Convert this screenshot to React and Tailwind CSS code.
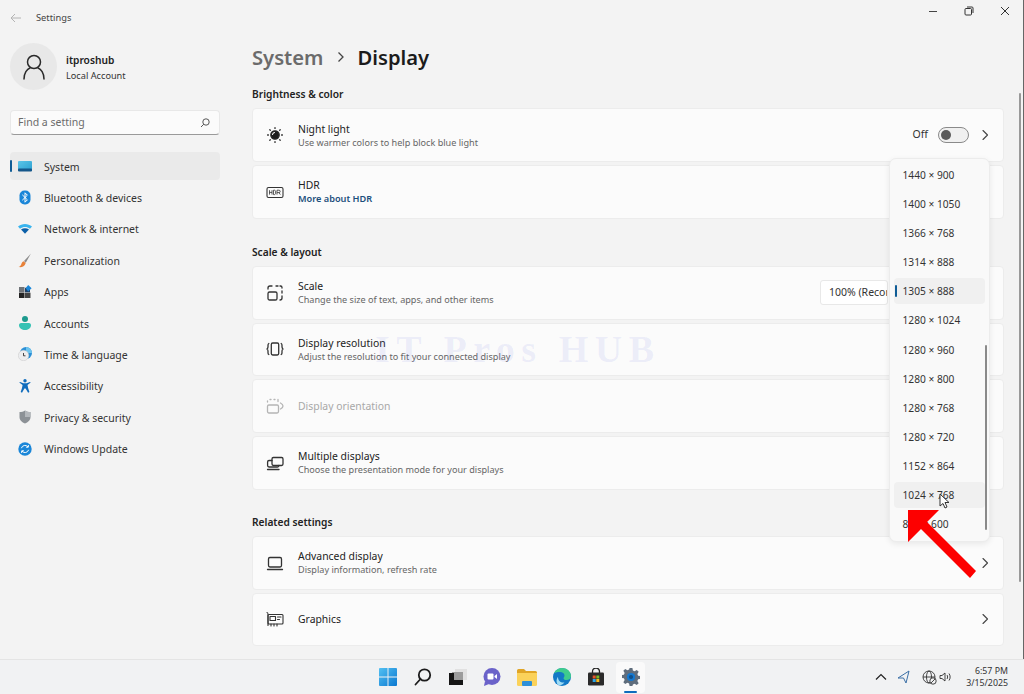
import React from "react";

const S = ({ children, w = 20, h = 20, vb = "0 0 20 20", sw = 1.3, c = "#333" }) => (
  <svg width={w} height={h} viewBox={vb} fill="none" stroke={c} strokeWidth={sw} strokeLinecap="round" strokeLinejoin="round">{children}</svg>
);

const Chevron = () => (
  <S w={10} h={12} vb="0 0 10 12" sw={1.1} c="#444"><path d="M3 1.500 7.500 6 3 10.500" /></S>
);

const NightIcon = () => (
  <S sw={1.3} c="#2b2b2b">
    <circle cx="10" cy="10" r="4.200" fill="#1e1e1e" />
    <path d="M7.500 9.500a2.600 2.600 0 0 1 2-2" stroke="#fff" strokeWidth="1.100" />
    <path d="M10 2.600v.8M10 16.600v.8M2.600 10h.8M16.600 10h.8M4.800 4.800l.5.500M14.700 14.700l.5.500M4.800 15.200l.5-.5M14.700 5.300l.5-.5" />
  </S>
);
const HdrIcon = () => (
  <svg width="20" height="20" viewBox="0 0 20 20" fill="none" stroke="#333" strokeWidth="1.100">
    <rect x="2" y="5.500" width="16" height="10" rx="1.500" />
    <path d="M4.500 8.200v4.400M7 8.200v4.400M4.500 10.400H7M8.500 8.200v4.400h1.100a1.600 1.600 0 0 0 1-1V9.200a1.600 1.600 0 0 0-1-1zM12 12.600V8.200h2a1.100 1.100 0 0 1 0 2.400h-2M14 10.600l1.300 2" strokeWidth=".8" />
  </svg>
);
const ScaleIcon = () => (
  <S c="#333">
    <rect x="3" y="9" width="9" height="8" rx="1.600" />
    <path d="M3 6V5a2 2 0 0 1 2-2h2M11 3h2M15 3h.5A1.500 1.500 0 0 1 17 4.500V5M17 8v2M17 13v2a2 2 0 0 1-2 2" />
  </S>
);
const ResIcon = () => (
  <S c="#333">
    <rect x="6.300" y="4" width="7.400" height="12" rx="1.400" />
    <path d="M3.800 4.500C2.800 5 3 6 3 7s.4 2-1 3c1.400 1 1 2 1 3s-.2 2 .8 2.500M16.200 4.500c1 .5.8 1.500.8 2.500s-.4 2 1 3c-1.400 1-1 2-1 3s.2 2-.8 2.500" />
  </S>
);
const OrientIcon = () => (
  <S c="#b5b5b5">
    <rect x="2.500" y="9" width="11" height="8" rx="1.400" />
    <path d="M2.500 6V5M5 3.500h1M9 3.500h1M13 3.500v2M15.500 7c1.500.8 2.500 1.800 2.500 3s-1 2.200-2.500 3" />
  </S>
);
const MultiIcon = () => (
  <S c="#333">
    <rect x="7" y="4.500" width="11" height="8" rx="1.400" />
    <path d="M7 7.500H4a1.400 1.400 0 0 0-1.400 1.400v3.700A1.400 1.400 0 0 0 4 14h8.500a1.400 1.400 0 0 0 1.400-1.400v-.1M2.500 16.500h11.500" />
  </S>
);
const LaptopIcon = () => (
  <S c="#333">
    <rect x="3.500" y="4.500" width="13" height="9.500" rx="1.400" />
    <path d="M2.500 16.500h15" />
  </S>
);
const GpuIcon = () => (
  <S sw={1.100} c="#333">
    <path d="M2 3.500c1 0 1 1 1 2v11" />
    <rect x="3" y="5.500" width="15" height="9.500" rx="1" />
    <rect x="5" y="7.500" width="5.500" height="4" />
    <path d="M12.500 8h3.500M12.500 10.500h2M6 15v2M9 15v2M12 15v2" />
  </S>
);

const SysIcon = () => (
  <svg width="14" height="11" viewBox="0 0 14 11"><defs><linearGradient id="sy" x1="0" y1="0" x2="1" y2="1"><stop offset="0" stopColor="#5cc5e8" /><stop offset="1" stopColor="#2a9fd0" /></linearGradient></defs><rect width="14" height="10" rx="1" fill="url(#sy)" /><rect y="7.500" width="14" height="3" rx="1" fill="#14568a" /></svg>
);
const BtIcon = () => (
  <svg width="12" height="15" viewBox="0 0 12 15"><rect width="11" height="14" x=".5" y=".5" rx="5" fill="#1a86d8" /><path d="M3.300 4.800 8.400 9.800 6 12.200V2.800L8.400 5.200 3.300 10.200" fill="none" stroke="#fff" strokeWidth="1" /></svg>
);
const WifiIcon = () => (
  <svg width="14" height="11" viewBox="0 0 14 11"><path d="M0 3.600C3.800 0 10.200 0 14 3.600L12 5.800C9 3.400 5 3.400 2 5.800z" fill="#39b4ee" /><path d="M3 6.600c2.400-1.800 5.600-1.800 8 0L7 10.800z" fill="#0b5fa8" /></svg>
);
const BrushIcon = () => (
  <svg width="14" height="15" viewBox="0 0 14 15"><path d="M13 .5 6 8l1.800 1.700z" fill="#8a8a8a" /><path d="M5.600 8.200c-2 .6-2 2.800-2.600 3.800-.4.800-1.500 1.600-2.500 2 3 .6 6.200-.4 7.200-4z" fill="#e8823a" /></svg>
);
const AppsIcon = () => (
  <svg width="13" height="13" viewBox="0 0 13 13"><rect y="2" width="5.500" height="5.300" fill="#6f7378" /><rect y="7.700" width="5.500" height="5.300" fill="#222" /><rect x="6" y="7.700" width="5.500" height="5.300" fill="#444" /><rect x="6" y="2.800" width="5" height="4.500" fill="#1d3f66" /><path d="M9.200 0 12.600 3.200 9.200 6.400 6.600 3.200z" fill="#1a86d8" /></svg>
);
const AccIcon = () => (
  <svg width="12" height="14" viewBox="0 0 12 14"><circle cx="6" cy="3" r="3" fill="#1d9a8e" /><path d="M0 9.200C0 7.400 1.400 7 3 7h6c1.600 0 3 .4 3 2.200C12 12 9 14 6 14S0 12 0 9.200z" fill="#36c2b4" /></svg>
);
const TimeIcon = () => (
  <svg width="14" height="14" viewBox="0 0 14 14"><circle cx="8" cy="6" r="6" fill="#2b8fd6" /><path d="M8 0a6 6 0 0 1 6 6H8z" fill="#6cc4ee" /><circle cx="5.500" cy="8.500" r="5.200" fill="#ecedef" stroke="#c8c8c8" strokeWidth=".5" /><path d="M5.500 6v2.800h2" stroke="#333" strokeWidth=".9" fill="none" /></svg>
);
const A11yIcon = () => (
  <svg width="12" height="14" viewBox="0 0 12 14" fill="#0f6cbd"><circle cx="6" cy="1.800" r="1.700" /><path d="M.3 3.600 1 3l3.400 1.200h3.200L11 3l.7.6-3.200 2.400.6 3 1.300 4-1.300.7L6.600 9.600h-1.200L3 13.700l-1.300-.7L3 9l.6-3z" /></svg>
);
const ShieldIcon = () => (
  <svg width="12" height="14" viewBox="0 0 12 14"><path d="M6 .5c1.500 1 3.500 1.600 5.500 1.600V7c0 3.400-2.600 5.400-5.500 6.500C3.100 12.400.5 10.400.5 7V2.100C2.500 2.100 4.500 1.500 6 .5z" fill="#8c9196" /><path d="M6 .5c1.500 1 3.500 1.600 5.500 1.600V7H6z" fill="#b4b8bc" /></svg>
);
const UpdIcon = () => (
  <svg width="14" height="14" viewBox="0 0 14 14"><circle cx="7" cy="7" r="6.700" fill="#1a86d8" /><path d="M3.400 6.200A3.700 3.700 0 0 1 10 5M10.600 7.800A3.700 3.700 0 0 1 4 9M10.300 3v2.200H8.100M3.700 11V8.800h2.200" fill="none" stroke="#fff" strokeWidth="1" /></svg>
);

const nav = [
  ["System", SysIcon],
  ["Bluetooth & devices", BtIcon],
  ["Network & internet", WifiIcon],
  ["Personalization", BrushIcon],
  ["Apps", AppsIcon],
  ["Accounts", AccIcon],
  ["Time & language", TimeIcon],
  ["Accessibility", A11yIcon],
  ["Privacy & security", ShieldIcon],
  ["Windows Update", UpdIcon],
];

const res = ["1440 × 900", "1400 × 1050", "1366 × 768", "1314 × 888", "1305 × 888", "1280 × 1024", "1280 × 960", "1280 × 800", "1280 × 768", "1280 × 720", "1152 × 864", "1024 × 768", "800 × 600"];

const Row = ({ icon: I, title, sub, link, disabled, right, className = "" }) => (
  <div className={`flex items-center h-[53.700px] rounded-[4px] bg-[#fbfbfb] border border-[#ececec] pl-[12px] pr-[13px] ${className}`}>
    <div className="w-[20px] h-[20px] shrink-0"><I /></div>
    <div className="ml-[13px] flex-1 min-w-0">
      <div className={`text-[10.400px] leading-[14px] ${disabled ? "text-[#a8a8a8]" : "text-[#222]"}`}>{title}</div>
      {sub && <div className="text-[9.100px] leading-[13px] text-[#666]">{sub}</div>}
      {link && <div className="text-[9.200px] leading-[13px] font-semibold text-[#1c4f7c]">{link}</div>}
    </div>
    {right}
  </div>
);

const Heading = ({ children, className = "" }) => (
  <div className={`text-[10.200px] leading-[14px] font-semibold text-[#222] ${className}`}>{children}</div>
);

export default function App() {
  return (
    <div className="relative w-[1024px] h-[694px] overflow-hidden bg-[#f3f3f3] flex flex-col font-['Noto_Sans',sans-serif]">
      <div className="flex-1 flex min-h-0">
        <aside className="w-[236px] shrink-0 pl-[10px] pr-[16px]">
          <div className="flex items-center h-[36px]">
            <svg width="12" height="10" viewBox="0 0 12 10" fill="none" stroke="#b4b4b4" strokeWidth="1"><path d="M11 5H1M5 1 1 5l4 4" /></svg>
            <span className="ml-[14px] text-[9.300px] text-[#444]">Settings</span>
          </div>
          <div className="flex items-center mt-[7px] h-[47px]">
            <div className="w-[47px] h-[47px] rounded-full bg-[#e8e8e8] flex items-center justify-center">
              <svg width="24" height="26" viewBox="0 0 24 26" fill="none" stroke="#2a2a2a" strokeWidth="1.500"><circle cx="12" cy="8" r="6.500" /><path d="M2 25c0-6 3-10 6-11M22 25c0-6-3-10-6-11" strokeLinecap="round" /></svg>
            </div>
            <div className="ml-[9px] mt-[2px]">
              <div className="text-[10.200px] leading-[15px] font-semibold text-[#222]">itproshub</div>
              <div className="text-[9.200px] leading-[15px] text-[#333]">Local Account</div>
            </div>
          </div>
          <div className="mt-[20px] h-[25px] rounded-[4px] bg-[#fbfbfb] border border-[#e8e8e8] border-b-[#9a9a9a] flex items-center justify-between pl-[7px] pr-[9px]">
            <span className="text-[10.500px] text-[#6b6b6b]">Find a setting</span>
            <svg width="10" height="10" viewBox="0 0 10 10" fill="none" stroke="#444" strokeWidth=".9"><circle cx="6" cy="4" r="3.200" /><path d="M3.700 6.300 1 9" /></svg>
          </div>
          <nav className="mt-[17px]">
            {nav.map(([label, I], i) => (
              <div key={label} className={`relative flex items-center h-[28px] mb-[3.400px] rounded-[4px] ${i === 0 ? "bg-[#eaeaea]" : ""}`}>
                {i === 0 && <div className="absolute left-0 top-[8px] w-[2px] h-[12px] rounded-full bg-[#0f5c96]" />}
                <div className="w-[30px] flex justify-center shrink-0"><I /></div>
                <span className="ml-[4px] mt-[3px] text-[10.500px] text-[#333]">{label}</span>
              </div>
            ))}
          </nav>
        </aside>
        <main className="flex-1 pl-[16px] pr-[20px] min-w-0">
          <div className="flex items-center h-[30px] mt-[42px] text-[20.200px] font-semibold leading-[30px]">
            <span className="text-[#6b6b6b]">System</span>
            <svg width="14" height="14" viewBox="0 0 14 14" fill="none" stroke="#444" strokeWidth="1.300" className="mx-[10px]"><path d="M4.500 2.500 9 7l-4.500 4.500" /></svg>
            <span className="text-[#1b1b1b]">Display</span>
          </div>
          <Heading className="mt-[15px]">Brightness &amp; color</Heading>
          <Row className="mt-[7.400px]" icon={NightIcon} title="Night light" sub="Use warmer colors to help block blue light" right={
            <div className="flex items-center">
              <span className="text-[10.500px] text-[#333]">Off</span>
              <div className="ml-[10px] w-[31px] h-[16px] rounded-full border border-[#8a8a8a] bg-[#f0f0f0] flex items-center pl-[2px]">
                <div className="w-[10px] h-[10px] rounded-full bg-[#5a5a5a]" />
              </div>
              <div className="ml-[11px]"><Chevron /></div>
            </div>
          } />
          <Row className="mt-[3px]" icon={HdrIcon} title="HDR" link="More about HDR" />
          <Heading className="mt-[26.200px]">Scale &amp; layout</Heading>
          <Row className="mt-[7px]" icon={ScaleIcon} title="Scale" sub="Change the size of text, apps, and other items" right={
            <div className="mr-[102px] w-[68px] h-[25px] overflow-hidden rounded-[3px] bg-white border border-[#e8e8e8] pl-[8px] text-[10.500px] leading-[23px] text-[#333] whitespace-nowrap">100% (Recommended)</div>
          } />
          <Row className="mt-[3px]" icon={ResIcon} title="Display resolution" sub="Adjust the resolution to fit your connected display" />
          <Row className="mt-[3px]" icon={OrientIcon} title="Display orientation" disabled />
          <Row className="mt-[3px]" icon={MultiIcon} title="Multiple displays" sub="Choose the presentation mode for your displays" />
          <Heading className="mt-[25.200px]">Related settings</Heading>
          <Row className="mt-[7px]" icon={LaptopIcon} title="Advanced display" sub="Display information, refresh rate" right={<Chevron />} />
          <Row className="mt-[3px]" icon={GpuIcon} title="Graphics" right={<Chevron />} />
        </main>
      </div>

      {/* taskbar */}
      <footer className="relative h-[35px] shrink-0 bg-[#f1f2f3] border-t border-[#e4e4e4] flex items-center">
        <div className="ml-[371px] flex items-center h-full">
          <div className="w-[34.700px] flex justify-center">
            <svg width="18" height="18" viewBox="0 0 19 19"><defs><linearGradient id="wl" x1="0" y1="0" x2="1" y2="1"><stop offset="0" stopColor="#52c0f2" /><stop offset="1" stopColor="#0b78d0" /></linearGradient></defs><path fill="url(#wl)" d="M0 1a1 1 0 0 1 1-1h8v9H0zM10 0h8a1 1 0 0 1 1 1v8h-9zM0 10h9v9H1a1 1 0 0 1-1-1zM10 10h9v8a1 1 0 0 1-1 1h-8z" /></svg>
          </div>
          <div className="w-[34.700px] flex justify-center">
            <svg width="18" height="18" viewBox="0 0 18 18" fill="none" stroke="#1c1c1c" strokeWidth="1.800"><circle cx="10.500" cy="7" r="5.700" /><path d="M6.500 11 1.500 16.500" strokeLinecap="round" /></svg>
          </div>
          <div className="w-[34.700px] flex justify-center">
            <svg width="18" height="16" viewBox="0 0 18 16"><rect x="6" y="0" width="12" height="11" fill="#e1e1e1" /><rect x="3" y="3" width="11" height="10" fill="#9c9c9c" /><path d="M0 4h5v7h9v5H0z" fill="#151515" /></svg>
          </div>
          <div className="w-[34.700px] flex justify-center">
            <svg width="18" height="18" viewBox="0 0 18 18"><circle cx="9" cy="8.500" r="8.500" fill="#6a62c9" /><path d="M2 13 1 18l5-2z" fill="#6a62c9" /><rect x="4.500" y="5.500" width="6" height="6" rx="1" fill="#fff" /><path d="M11.500 8 14 6v5l-2.500-2z" fill="#fff" /></svg>
          </div>
          <div className="w-[34.700px] flex justify-center">
            <svg width="20" height="17" viewBox="0 0 20 17"><path d="M0 1.500A1.500 1.500 0 0 1 1.500 0H7l2 2h9.500A1.500 1.500 0 0 1 20 3.500V6H0z" fill="#e0a526" /><path d="M0 4h20v11.500a1.500 1.500 0 0 1-1.500 1.500h-17A1.500 1.500 0 0 1 0 15.500z" fill="#fbd25a" /><rect x="5" y="12" width="10" height="5" rx="1" fill="#2d8fd8" /></svg>
          </div>
          <div className="w-[34.700px] flex justify-center">
            <svg width="18" height="18" viewBox="0 0 18 18"><circle cx="9" cy="9" r="9" fill="#1279c6" /><path d="M1 5C3 1 7 0 9 0c5 0 9 3.500 9 8 0 2.500-2 4-4.500 4-2 0-3-1-3-1.800 0-.8 1-1 1-2.700C11.500 5.500 9.500 4 7 4 4.500 4 2.500 4.500 1 5z" fill="#3ecb8e" /><path d="M5 9c0 3.500 2.500 6 6.500 5.500-1.500 2-4 3-6 2.500C3 15.500 3 11 5 9z" fill="#9fdcf5" /></svg>
          </div>
          <div className="w-[34.700px] flex justify-center">
            <svg width="18" height="18" viewBox="0 0 18 18"><path d="M5.500 5V3.500a3.500 3.500 0 0 1 7 0V5" fill="none" stroke="#222" strokeWidth="1.300" /><rect x="1" y="4.500" width="16" height="13" rx="1.200" fill="#2a2a2a" /><rect x="5.700" y="7.500" width="3" height="3" fill="#e8542d" /><rect x="9.300" y="7.500" width="3" height="3" fill="#7cba2a" /><rect x="5.700" y="11" width="3" height="3" fill="#2aa5e8" /><rect x="9.300" y="11" width="3" height="3" fill="#f6b820" /></svg>
          </div>
          <div className="relative w-[29px] h-[31px] rounded-[4px] bg-[#fafafa] flex justify-center items-center ml-[2.500px]">
            <svg width="18" height="18" viewBox="0 0 19 19"><path d="M8 0h3l.5 2.600 1.800.8L15.600 2l2 2-1.400 2.300.8 1.800 2 .4v3l-2 .4-.8 1.800 1.400 2.300-2 2-2.300-1.400-1.800.8L11 19H8l-.5-2.600-1.800-.8L3.400 17l-2-2 1.400-2.300L2 10.900 0 10.500v-3l2-.4.800-1.800L1.400 3l2-2 2.300 1.400 1.800-.8z" fill="#5f6d7c" /><circle cx="9.500" cy="9.500" r="4.300" fill="#1478d0" /><circle cx="9.500" cy="9.500" r="2.200" fill="#0f4f8a" /></svg>
            <div className="absolute bottom-[0px] left-[8px] w-[13px] h-[2px] rounded-full bg-[#0f6cbd]" />
          </div>
        </div>
        <div className="ml-auto flex items-center mr-[16px]">
          <svg width="12" height="8" viewBox="0 0 12 8" fill="none" stroke="#222" strokeWidth="1.200"><path d="M1 6.500 6 1.500l5 5" /></svg>
          <svg width="13" height="14" viewBox="0 0 13 14" fill="none" stroke="#3a6fa6" strokeWidth="1" className="ml-[10px]"><path d="M12 1 1 8h5.500L9 13z" /></svg>
          <svg width="15" height="15" viewBox="0 0 15 15" fill="none" stroke="#333" strokeWidth=".9" className="ml-[12px]"><circle cx="7" cy="7" r="6" /><ellipse cx="7" cy="7" rx="2.500" ry="6" /><path d="M1 7h12" /><circle cx="11" cy="11" r="3.200" fill="#f1f2f3" /><path d="M8.800 13.200 13.200 8.800" /></svg>
          <svg width="13" height="12" viewBox="0 0 13 12" fill="none" stroke="#333" strokeWidth=".9" className="ml-[2px]"><path d="M1 4.500h2L6 2v8L3 7.500H1zM8 4c.8 1 .8 3 0 4M10 2.500c1.500 2 1.500 5 0 7" /></svg>
          <div className="ml-[14px] text-right text-[8.800px] leading-[12px] text-[#333]">
            <div>6:57 PM</div>
            <div>3/15/2025</div>
          </div>
        </div>
      </footer>

      {/* window controls */}
      <div className="absolute top-[5px] left-[915px] w-[105px] flex items-center h-[12px]">
        <div className="ml-[14px] w-[8px] h-px bg-[#444]" />
        <svg width="10" height="10" viewBox="0 0 10 10" fill="none" stroke="#333" strokeWidth="1" className="ml-[27px]"><rect x="1" y="2.500" width="6.500" height="6.500" rx="1" /><path d="M3 1h5a1 1 0 0 1 1 1v5" /></svg>
        <svg width="10" height="10" viewBox="0 0 10 10" fill="none" stroke="#333" strokeWidth="1" className="ml-[26px]"><path d="M1 1l8 8M9 1 1 9" /></svg>
      </div>

      {/* watermark */}
      <div className="absolute left-[375px] top-[327px] text-[38px] tracking-[6.500px] leading-[44px] font-bold font-['Liberation_Serif',serif] text-[#5b6be0]/10 pointer-events-none whitespace-nowrap">IT Pros HUB</div>

      {/* page scrollbar and window edge */}
      <div className="absolute left-[1019px] top-[93px] w-[2px] h-[489px] rounded-full bg-[#999999]" />
      <div className="absolute left-[1023px] top-0 w-[1px] h-[659px] bg-[#666666]" />

      {/* dropdown */}
      <div className="absolute left-[889px] top-[158px] w-[101px] h-[384px] rounded-[7px] bg-[#f9f9f9] border border-[#ececec] shadow-[0_2px_6px_rgba(0,0,0,0.08)] px-[4px] pt-[3px]">
        {res.map((r, i) => (
          <div key={r} className={`relative h-[26px] mb-[3.100px] rounded-[4px] pl-[8.500px] text-[10.200px] leading-[26px] text-[#333] whitespace-nowrap ${i === 4 || i === 11 ? "bg-[#f0f0f0]" : ""}`}>
            {i === 4 && <div className="absolute left-[1px] top-[7px] w-[2px] h-[12px] rounded-full bg-[#0f5c96]" />}
            {r}
          </div>
        ))}
        <div className="absolute left-[95px] top-[186px] w-[2px] h-[185px] rounded-full bg-[#8a8a8a]" />
      </div>

      {/* cursor */}
      <svg className="absolute left-[939px] top-[493px]" width="12" height="17" viewBox="0 0 12 17"><path d="M1 1v12l3-2.500 2 4.500 2-1-2-4.500h4z" fill="#fff" stroke="#333" strokeWidth="1" /></svg>

      {/* red arrow */}
      <svg className="absolute left-[900px] top-[500px]" width="84" height="84" viewBox="900 500 84 84"><polygon points="908,510 939,510 927,522 976,571 970,578 921,529 908,542" fill="#fd0000" /></svg>
    </div>
  );
}
